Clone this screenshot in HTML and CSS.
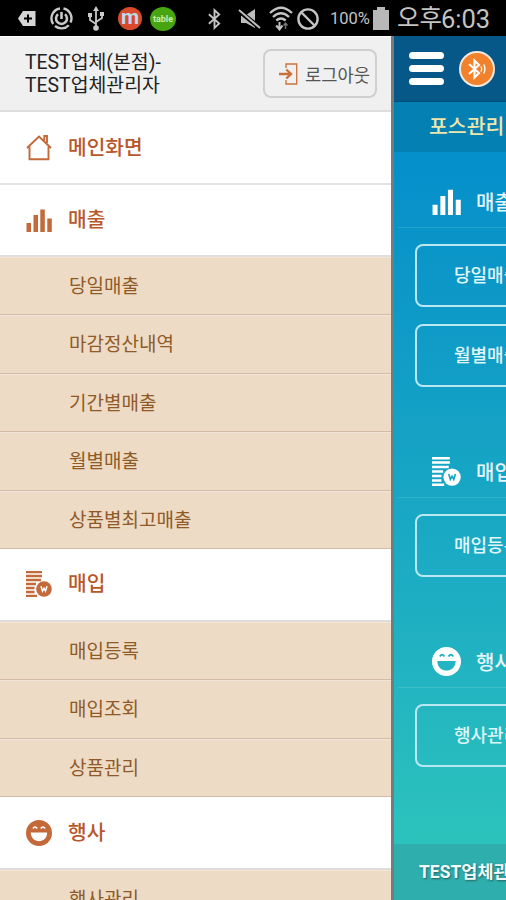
FILE: index.html
```html
<!DOCTYPE html>
<html lang="ko">
<head>
  <meta charset="UTF-8" />
  <meta name="viewport" content="width=device-width, initial-scale=1.0" />
  <title>포스관리</title>
  <link rel="stylesheet" href="styles.css">
</head>

<body>

  <!-- shared icons -->
  <svg class="sprite">
    <symbol id="icon-home" viewBox="0 0 26 26">
      <path d="M1 13 L13 1.5 L25 13 M3.5 11.5 V24.3 H22.5 V11.5 M18.3 5.5 V1 H21 V8" fill="none" stroke="currentColor" stroke-width="1.9"/>
    </symbol>
    <symbol id="icon-chart" viewBox="0 0 26 26">
      <path d="M.5 16H5V25H.5zM7.5 8H12V25H7.5zM14.3 2.5H18.8V25H14.3zM21.3 11.5H25.8V25H21.3z" fill="currentColor"/>
    </symbol>
    <symbol id="icon-stock" viewBox="0 0 26 26">
      <path d="M0 1H16M0 5H16M0 9H15M0 13H10M0 17H8.5M0 21H8.5M0 25H11" stroke="currentColor" stroke-width="2.3"/>
      <circle cx="18" cy="18" r="7.8" fill="currentColor"/>
      <path d="M15 15.2 L16.5 20 L18 17.3 L19.5 20 L21 15.2" fill="none" stroke="var(--hole)" stroke-width="1.5"/>
    </symbol>
    <symbol id="icon-smile" viewBox="0 0 26 26">
      <circle cx="13" cy="13" r="13" fill="currentColor"/>
      <path d="M4.8 12.5H21.2C21.2 24 4.8 24 4.8 12.5z" fill="var(--hole)"/>
      <path d="M7 8.5Q9 5.5 11.2 8.5M14.8 8.5Q17 5.5 19 8.5" fill="none" stroke="var(--hole)" stroke-width="1.7"/>
    </symbol>
    <symbol id="icon-bt" viewBox="0 0 16 22">
      <path d="M2 6 L13 15.8 L8 20.5 V1.5 L13 6.2 L2 16" fill="none" stroke="currentColor" stroke-width="2"/>
    </symbol>
  </svg>

  <!-- ========== STATUS BAR ========== -->
  <div class="status-bar">
    <div class="notifications">
      <svg width="18" height="17" viewBox="0 0 18 17"><path d="M0 8.5 L5 1H17.5V16H5z" fill="#d6d6d6"/><path d="M10 4.5V12.5M6 8.5H14" stroke="#000" stroke-width="2"/></svg>
      <svg class="sync" width="23" height="23" viewBox="0 0 23 23" fill="none" stroke="#c9c9c9"><path d="M3.2 17A10 10 0 0 1 10 1.5M13.5 1.5A10 10 0 0 1 20.5 15.5M18.8 18.2A10 10 0 0 1 5 19" stroke-width="2.4"/><path d="M8 7.2A5.5 5.5 0 1 0 15 7.2M11.5 5V12" stroke-width="2.6"/></svg>
      <svg class="usb" width="16" height="25" viewBox="0 0 16 25"><path d="M8 3V22M8 18L2 14V8.5M8 16L14 12V8" fill="none" stroke="#c9c9c9" stroke-width="1.8"/><path d="M8 0L11 5H5zM0 7H4V11H0zM12 6H16V10H12z" fill="#c9c9c9"/><circle cx="8" cy="22" r="2.8" fill="#c9c9c9"/></svg>
      <span class="app app-m">m</span>
      <span class="app app-table">table</span>
    </div>
    <div class="system">
      <svg width="15" height="22"><use href="#icon-bt"/></svg>
      <svg class="mute" width="24" height="22" viewBox="0 0 24 22"><path d="M3 7H8L17 1V20L8 15H3z" fill="#bdbdbd"/><path d="M0 2L22 20" stroke="#000" stroke-width="4.5"/><path d="M1 2L22 20" stroke="#bdbdbd" stroke-width="2"/></svg>
      <svg class="wifi" width="24" height="25" viewBox="0 0 24 25" fill="none" stroke="#c4c4c4"><path d="M1 7Q12-3.5 23 7M4 11Q12 3.5 20 11M7.3 14.5Q12 10.5 16.7 14.5" stroke-width="2.3"/><path d="M10.5 16V22M7.2 19.5L10.5 23.5L13.5 19.5" stroke-width="2"/><path d="M16.5 23V17.5M14.5 19.5L16.5 17L18.5 19.5" stroke="#777" stroke-width="1.4"/></svg>
      <svg class="block" width="22" height="22" viewBox="0 0 22 22"><path d="M4 4L18 18" stroke="#c4c4c4" stroke-width="2.4"/><circle cx="11" cy="11" r="9.6" fill="none" stroke="#c4c4c4" stroke-width="2.4"/></svg>
      <span class="percent">100%</span>
      <svg class="battery" width="16" height="23" viewBox="0 0 16 23"><path d="M0 3H4V0H12V3H16V23H0z" fill="#b8b8b8"/></svg>
      <span class="ampm">오후</span>
      <span class="clock">6:03</span>
    </div>
  </div>

  <div class="screen">

    <!-- ========== DRAWER MENU ========== -->
    <div class="drawer">
      <div class="account">
        <div class="account-name">TEST업체(본점)-<br>TEST업체관리자</div>
        <button class="logout">
          <svg width="19" height="22" viewBox="0 0 19 22" fill="none" stroke="#c9703c"><path d="M7 5V1H17.7V21H7V17" stroke-width="1.3"/><path d="M0 11H11M7.3 6.5L12 11L7.3 15.5" stroke-width="2.4"/></svg>
          로그아웃
        </button>
      </div>

      <div class="menu-head"><svg><use href="#icon-home"/></svg>메인화면</div>
      <div class="menu-head"><svg><use href="#icon-chart"/></svg>매출</div>
      <div class="submenu">
        <div class="menu-item">당일매출</div>
        <div class="menu-item">마감정산내역</div>
        <div class="menu-item">기간별매출</div>
        <div class="menu-item">월별매출</div>
        <div class="menu-item">상품별최고매출</div>
      </div>
      <div class="menu-head"><svg><use href="#icon-stock"/></svg>매입</div>
      <div class="submenu">
        <div class="menu-item">매입등록</div>
        <div class="menu-item">매입조회</div>
        <div class="menu-item">상품관리</div>
      </div>
      <div class="menu-head"><svg><use href="#icon-smile"/></svg>행사</div>
      <div class="submenu">
        <div class="menu-item">행사관리</div>
      </div>
    </div>

    <!-- ========== MAIN PAGE (pushed right) ========== -->
    <div class="main">
      <div class="topbar">
        <div class="burger"><i></i><i></i><i></i></div>
        <div class="bt-badge">
          <svg width="24" height="24" viewBox="0 0 24 24" fill="none" stroke="#fff"><path d="M4 7L14 16L9.5 20.5V3.5L14 8L4 17" stroke-width="2.1"/><path d="M16 9.5Q17.5 12 16 14.5M18.8 7.5Q21 12 18.8 16.5" stroke-width="1.4"/></svg>
        </div>
      </div>
      <div class="tab">포스관리</div>
      <div class="section section-sales">
        <div class="section-head"><svg><use href="#icon-chart"/></svg>매출</div>
        <div class="tile">당일매출</div>
        <div class="tile">월별매출</div>
      </div>
      <div class="section section-stock">
        <div class="section-head"><svg><use href="#icon-stock"/></svg>매입</div>
        <div class="tile">매입등록</div>
      </div>
      <div class="section section-event">
        <div class="section-head"><svg><use href="#icon-smile"/></svg>행사</div>
        <div class="tile">행사관리</div>
      </div>
      <div class="footer">TEST업체관리자</div>
    </div>

  </div>
</body>
</html>
```
FILE: styles.css
```css
* { box-sizing: border-box; }
body {
  font-family: Roboto, 'Noto Sans CJK KR', sans-serif;
  margin: 0;
  width: 506px;
  height: 900px;
  overflow: hidden;
  background: #000;
}
svg { display: block; flex: none; }
.sprite { display: none; }

/* ---------- STATUS BAR ---------- */
.status-bar { display: flex; height: 36px; padding-top: 1px; color: #c4c4c4; background: #000; }
.notifications { display: flex; align-items: center; width: 207px; padding-left: 18px; }
.system { display: flex; align-items: center; white-space: nowrap; }
.sync { margin-left: 14px; }
.usb { margin-left: 15px; }
.app { display: flex; align-items: center; justify-content: center; width: 24px; height: 23px; border-radius: 50%; font-weight: 700; }
.app-m { margin-left: 14px; padding-bottom: 3px; background: #d9492b; color: #b9dce8; font-size: 21px; }
.app-table { margin-left: 8px; width: 26px; height: 24px; background: #47a512; color: #c5ecae; font-size: 9px; }
.mute { margin-left: 16px; }
.wifi { margin-left: 7px; }
.block { margin-left: 4px; }
.percent { width: 43px; padding-left: 11px; font-size: 16.5px; }
.battery { margin-left: 11px; }
.ampm { width: 52px; padding-left: 8px; font-size: 24.5px; line-height: 34px; }
.clock { font-size: 25.5px; line-height: 34px; }

.screen { display: flex; height: 864px; overflow: hidden; }

/* ---------- DRAWER ---------- */
.drawer { flex: none; width: 391px; height: 864px; overflow: hidden; background: #fff; }
.account { display: flex; justify-content: space-between; height: 76px; padding: 12px 14px 0 25px; background: #f0f0f0; border-top: 1px solid #fff; border-bottom: 2px solid #dedede; }
.account-name { padding-top: 2px; font-size: 19.4px; line-height: 23px; color: #222; white-space: nowrap; }
.logout { display: flex; align-items: center; gap: 7px; width: 114px; height: 49px; padding: 0 0 0 14px; font: 17.7px 'Noto Sans CJK KR', sans-serif; color: #555; white-space: nowrap; background: #f0f0f0; border: 2px solid #cfcfcf; border-radius: 8px; }

.menu-head { --hole: #fff; display: flex; align-items: center; gap: 16px; height: 71px; padding-left: 26px; font-size: 20.3px; font-weight: 500; line-height: 30px; color: #b8572a; }
.menu-head svg { width: 26px; height: 26px; color: #c3693a; }
.menu-head + .menu-head { height: 72px; border-top: 2px solid #e2e2e4; }
.submenu { border-top: 2px solid #dfdedd; }
.menu-item { height: 58.4px; padding: 15px 0 0 69px; font-size: 19px; line-height: 28px; color: #8f5a28; background: #eddbc5; border-top: 1px solid #f3e6d7; border-bottom: 1px solid #d4bba7; }

/* ---------- MAIN PAGE ---------- */
.main { flex: none; display: flex; flex-direction: column; width: 380px; height: 864px; border-left: 3px solid #777b7e; background: linear-gradient(#058fcc 117px, #0a95c8 210px, #20b1c2 610px, #2cc3bc 808px); }
.topbar { display: flex; align-items: center; height: 67px; padding-left: 15px; background: #065889; border-bottom: 1px solid #034b79; }
.burger { display: flex; flex-direction: column; gap: 6px; width: 35px; margin-right: 15px; }
.burger i { height: 7px; border-radius: 4px; background: #fff; }
.bt-badge { display: flex; align-items: center; justify-content: center; width: 36px; height: 36px; border: 2px solid #f5e7dc; border-radius: 50%; background: #f2812b; }
.tab { height: 50px; padding-left: 35px; font-size: 20.5px; font-weight: 500; line-height: 50px; color: #f0e7ac; background: #0580b3; }
.section { padding: 0 0 18px 21px; }
.section-head { display: flex; align-items: center; gap: 15px; height: 76px; margin: 0 0 16px -17px; padding: 24px 0 0 34px; font-size: 20px; font-weight: 500; color: #e9f8ff; border-bottom: 1px solid rgba(255, 255, 255, .12); }
.section-head svg { width: 29px; height: 29px; color: #fff; }
.section-sales { --hole: #0994c9; }
.section-stock { --hole: #17a6c5; }
.section-event { --hole: #22b4c2; }
.tile { height: 63px; margin-bottom: 17px; padding-left: 37px; font-size: 18px; font-weight: 500; line-height: 59px; color: #e0f7fc; border: 2px solid #b9e7f2; border-radius: 8px; }
.footer { flex: 1; margin-top: 42px; padding-left: 25px; font-size: 17.5px; font-weight: 700; line-height: 56px; color: #f2fafa; text-shadow: 1px 1px 2px #25615f; background: #2eaeac; }
```
